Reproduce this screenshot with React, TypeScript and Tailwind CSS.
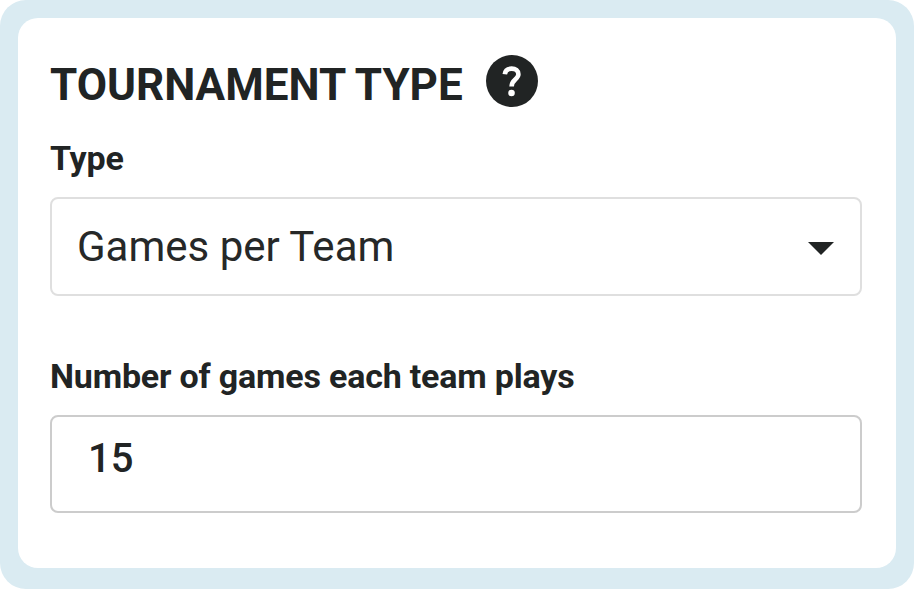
import type { ReactNode } from "react";

function FieldLabel({ htmlFor, children }: { htmlFor: string; children: ReactNode }) {
  return (
    <label
      htmlFor={htmlFor}
      className="block h-10 whitespace-nowrap text-[34px] leading-10 font-bold tracking-[-0.19px]"
    >
      {children}
    </label>
  );
}

function HelpIcon() {
  return (
    <svg viewBox="0 0 52 52" className="h-[52px] w-[52px] shrink-0" aria-label="Help">
      <circle cx="26" cy="26" r="26" fill="#212424" />
      <path
        d="M18.8 19.2C19.2 15.5 22 13.6 25.6 13.6C29.6 13.6 32.4 15.8 32.4 19.3C32.4 24.4 25.6 24.2 25.6 31.6"
        fill="none"
        stroke="#fff"
        strokeWidth="4.6"
      />
      <circle cx="25.5" cy="38" r="3.3" fill="#fff" />
    </svg>
  );
}

export default function App() {
  return (
    <div className="h-[590px] w-[915px] bg-white font-[Roboto,sans-serif] text-[#212424]">
      <div className="h-[589px] w-[914px] rounded-[26px] bg-[#daebf2] px-[18px] pt-[18px] pb-[21px]">
        <section className="h-full rounded-[20px] bg-white pt-9 pr-[34px] pl-8">
          <div className="flex h-[53px] items-center gap-[23px]">
            <h1 className="mt-2 w-[413px] whitespace-nowrap text-[44px] leading-[52px] font-bold">
              TOURNAMENT TYPE
            </h1>
            <HelpIcon />
          </div>

          <div className="mt-[31px]">
            <FieldLabel htmlFor="type">Type</FieldLabel>
            <button
              id="type"
              type="button"
              className="mt-[19px] flex h-[99px] w-full items-center justify-between rounded-[8px] border-2 border-[#dfdfdf] pr-[26px] pl-[25px] text-[42px] text-[#262828]"
            >
              <span className="whitespace-nowrap">Games per Team</span>
              <svg viewBox="0 0 26 13" className="mt-1 h-[13px] w-[26px]">
                <path d="M0 0H26L13 13Z" fill="#212424" />
              </svg>
            </button>
          </div>

          <div className="mt-[60px]">
            <FieldLabel htmlFor="games">Number of games each team plays</FieldLabel>
            <input
              id="games"
              defaultValue="15"
              className="mt-[19px] block h-[98px] w-full rounded-[8px] border-2 border-[#cccccc] pb-3 pl-9 text-[40px] font-medium outline-none"
            />
          </div>
        </section>
      </div>
    </div>
  );
}
